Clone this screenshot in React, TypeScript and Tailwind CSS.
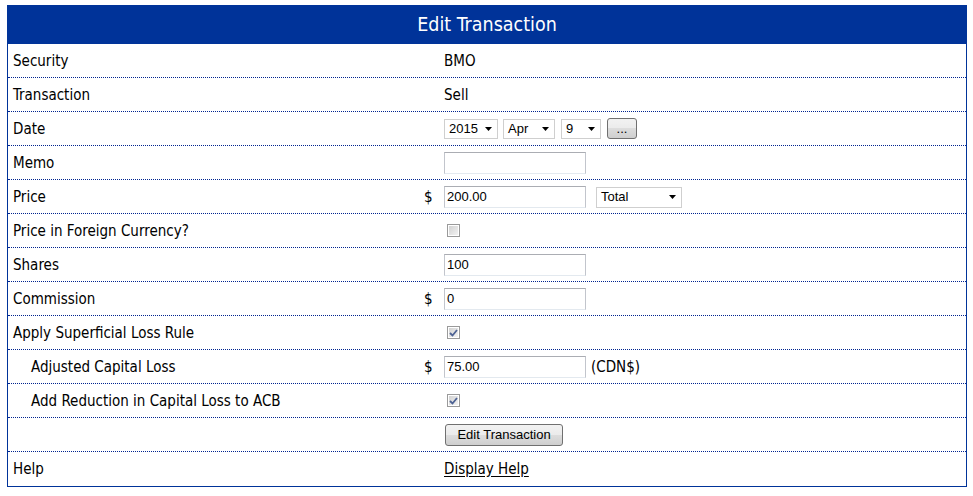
import React from 'react';

const labelFont = "font-['DejaVu_Sans_Condensed','DejaVu_Sans',sans-serif]";
const ctrlFont = "font-['Liberation_Sans',Arial,sans-serif] text-[13px] text-black";

function Arrow() {
  return (
    <svg className="pointer-events-none absolute right-[5px] top-1/2 -translate-y-1/2" width="7" height="4" viewBox="0 0 7 4">
      <path d="M0 0h7L3.5 4z" fill="#000" />
    </svg>
  );
}

function Select({ value, width, height = 'h-[20px]' }: { value: string; width: string; height?: string }) {
  return (
    <span className={`relative inline-flex items-center ${width} ${height} border border-[#cfcfcf] bg-white pl-[4px] ${ctrlFont}`}>
      {value}
      <Arrow />
    </span>
  );
}

function TextBox({ value = '' }: { value?: string }) {
  return (
    <span className={`inline-flex items-center w-[142px] h-[22px] border border-[#c2c5cc] border-t-[#abadb3] border-b-[#e3e9ef] bg-white pl-[2px] ${ctrlFont}`}>
      {value}
    </span>
  );
}

function Check({ checked }: { checked?: boolean }) {
  return (
    <span className="ml-[3px] inline-flex w-[13px] h-[13px] border border-[#9a9a9a] p-px bg-white">
      <span className="flex-1 flex items-center justify-center bg-[linear-gradient(135deg,#d2d2d2,#f3f3f3)]">
        {checked && (
          <svg width="9" height="8" viewBox="0 0 9 8">
            <path d="M1 4l2.5 2.5L8 1" stroke="#4d6294" strokeWidth="1.8" fill="none" />
          </svg>
        )}
      </span>
    </span>
  );
}

function Btn({ children, className }: { children: React.ReactNode; className: string }) {
  return (
    <span
      className={`inline-flex items-center justify-center rounded-[3px] border border-[#707070] bg-[linear-gradient(#f2f2f2_0%,#ebebeb_50%,#dddddd_50%,#cfcfcf_100%)] ${ctrlFont} ${className}`}
    >
      {children}
    </span>
  );
}

type Row = { label: string; indent?: boolean; dollar?: boolean; value: React.ReactNode };

const rows: Row[] = [
  { label: 'Security', value: <span className="pt-px">BMO</span> },
  { label: 'Transaction', value: <span className="pt-px">Sell</span> },
  {
    label: 'Date',
    value: (
      <div className="flex items-center">
        <Select value="2015" width="w-[54px]" />
        <span className="ml-[5px]"><Select value="Apr" width="w-[52px]" /></span>
        <span className="ml-[6px]"><Select value="9" width="w-[40px]" /></span>
        <Btn className="ml-[6px] w-[30px] h-[21px]">...</Btn>
      </div>
    ),
  },
  { label: 'Memo', value: <TextBox /> },
  {
    label: 'Price',
    dollar: true,
    value: (
      <div className="flex items-center">
        <TextBox value="200.00" />
        <span className="ml-[10px]"><Select value="Total" width="w-[86px]" height="h-[21px]" /></span>
      </div>
    ),
  },
  { label: 'Price in Foreign Currency?', value: <Check /> },
  { label: 'Shares', value: <TextBox value="100" /> },
  { label: 'Commission', dollar: true, value: <TextBox value="0" /> },
  { label: 'Apply Superficial Loss Rule', value: <Check checked /> },
  {
    label: 'Adjusted Capital Loss',
    indent: true,
    dollar: true,
    value: (
      <div className="flex items-center">
        <TextBox value="75.00" />
        <span className="ml-[5px] pt-px">(CDN$)</span>
      </div>
    ),
  },
  { label: 'Add Reduction in Capital Loss to ACB', indent: true, value: <Check checked /> },
  { label: '', value: <Btn className="ml-px w-[118px] h-[22px]">Edit Transaction</Btn> },
  { label: 'Help', value: <span className="pt-px underline underline-offset-2">Display Help</span> },
];

export default function App() {
  return (
    <div className={`bg-white w-[973px] h-[496px] pt-[5px] pl-[7px] ${labelFont} text-[15px] text-black`}>
      <div className="w-[960px] border border-[#003399]">
        <div className="h-[38px] bg-[#003399] flex items-center justify-center text-white text-[19.5px]">
          Edit Transaction
        </div>
        {rows.map((r, i) => (
          <div
            key={i}
            className={`grid grid-cols-[416px_20px_1fr] items-center h-[34px] ${
              i < rows.length - 1 ? 'border-b border-dotted border-[#00238f]' : ''
            }`}
          >
            <div className={`pt-px ${r.indent ? 'pl-[23px]' : 'pl-[5px]'}`}>{r.label}</div>
            <div className="pt-px text-right pr-[12px]">{r.dollar ? '$' : ''}</div>
            <div className="flex items-center">{r.value}</div>
          </div>
        ))}
      </div>
    </div>
  );
}
